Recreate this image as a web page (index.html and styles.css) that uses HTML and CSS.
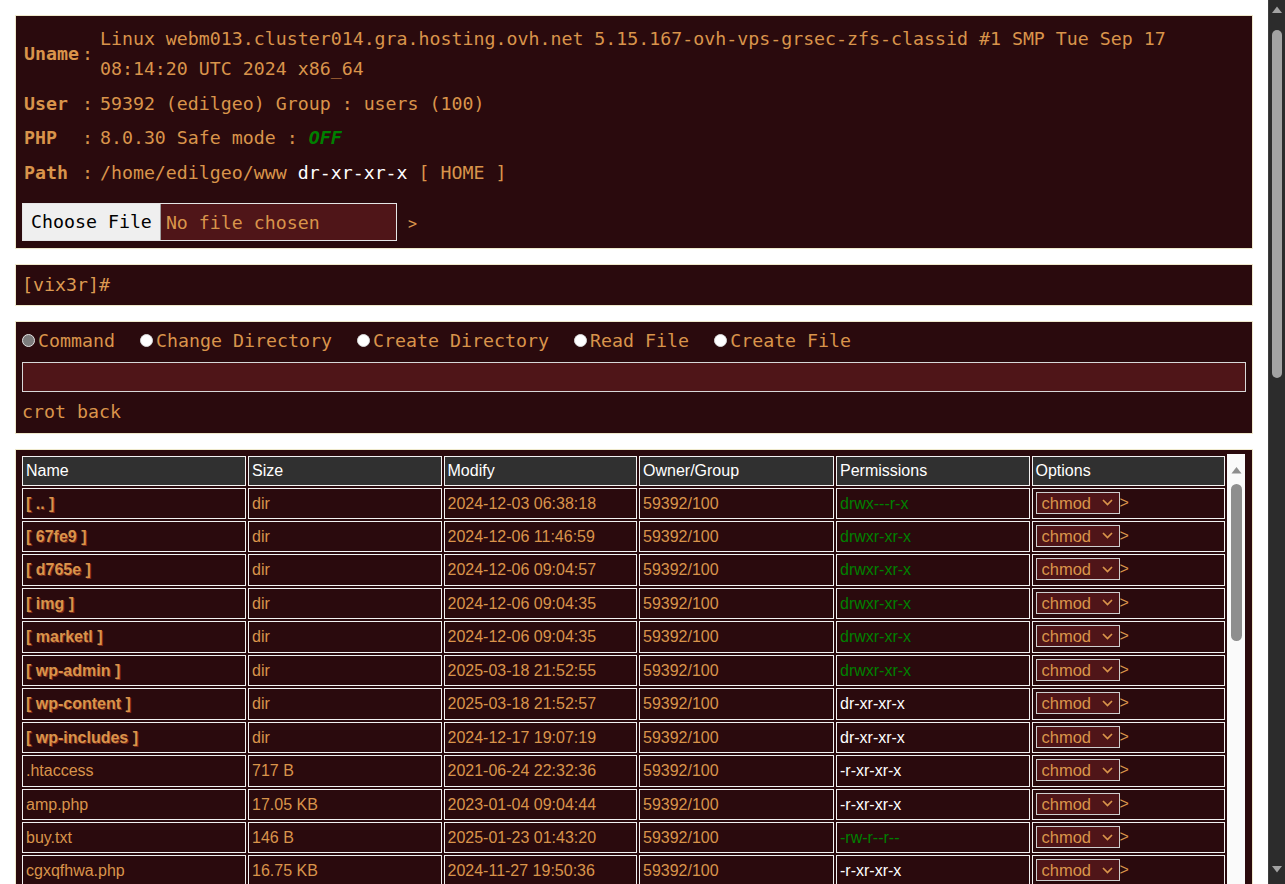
FILE: index.html
```html
<!DOCTYPE html>
<html lang="en">
<head>
<meta charset="utf-8">
<title>vix3r</title>
<link rel="stylesheet" href="styles.css">
</head>
<body>
<div class="page">
  <section class="panel info">
    <div class="info-grid">
      <b class="lbl">Uname</b><span class="colon">:</span><span class="val">Linux webm013.cluster014.gra.hosting.ovh.net 5.15.167-ovh-vps-grsec-zfs-classid #1 SMP Tue Sep 17 08:14:20 UTC 2024 x86_64</span>
      <b class="lbl">User</b><span class="colon">:</span><span class="val">59392 (edilgeo) Group : users (100)</span>
      <b class="lbl">PHP</b><span class="colon">:</span><span class="val">8.0.30 Safe mode : <i class="off">OFF</i></span>
      <b class="lbl">Path</b><span class="colon">:</span><span class="val">/home/edilgeo/www <span class="white">dr-xr-xr-x</span> <a class="home" href="#">[ HOME ]</a></span>
    </div>
    <form class="upload">
      <input class="file" type="file">
      <input class="go" type="submit" value="&gt;">
    </form>
  </section>

  <section class="panel prompt">[vix3r]#</section>

  <section class="panel cmd">
    <div class="radios">
      <label class="opt"><input type="radio" name="act" checked>Command</label>
      <label class="opt"><input type="radio" name="act">Change Directory</label>
      <label class="opt"><input type="radio" name="act">Create Directory</label>
      <label class="opt"><input type="radio" name="act">Read File</label>
      <label class="opt"><input type="radio" name="act">Create File</label>
    </div>
    <input class="cmd-input" type="text">
    <div class="back">crot back</div>
  </section>

  <section class="panel files">
    <div class="scroll">
      <table class="ftable">
        <colgroup><col class="c-name"><col><col><col class="c-owner"><col><col></colgroup>
        <thead>
          <tr><th>Name</th><th>Size</th><th>Modify</th><th>Owner/Group</th><th>Permissions</th><th>Options</th></tr>
        </thead>
        <tbody>
          <tr><td class="dir">[ .. ]</td><td>dir</td><td>2024-12-03 06:38:18</td><td>59392/100</td><td class="w">drwx---r-x</td><td class="act"><select><option>chmod</option></select><button class="arrow">&gt;</button></td></tr>
          <tr><td class="dir">[ 67fe9 ]</td><td>dir</td><td>2024-12-06 11:46:59</td><td>59392/100</td><td class="w">drwxr-xr-x</td><td class="act"><select><option>chmod</option></select><button class="arrow">&gt;</button></td></tr>
          <tr><td class="dir">[ d765e ]</td><td>dir</td><td>2024-12-06 09:04:57</td><td>59392/100</td><td class="w">drwxr-xr-x</td><td class="act"><select><option>chmod</option></select><button class="arrow">&gt;</button></td></tr>
          <tr><td class="dir">[ img ]</td><td>dir</td><td>2024-12-06 09:04:35</td><td>59392/100</td><td class="w">drwxr-xr-x</td><td class="act"><select><option>chmod</option></select><button class="arrow">&gt;</button></td></tr>
          <tr><td class="dir">[ marketl ]</td><td>dir</td><td>2024-12-06 09:04:35</td><td>59392/100</td><td class="w">drwxr-xr-x</td><td class="act"><select><option>chmod</option></select><button class="arrow">&gt;</button></td></tr>
          <tr><td class="dir">[ wp-admin ]</td><td>dir</td><td>2025-03-18 21:52:55</td><td>59392/100</td><td class="w">drwxr-xr-x</td><td class="act"><select><option>chmod</option></select><button class="arrow">&gt;</button></td></tr>
          <tr><td class="dir">[ wp-content ]</td><td>dir</td><td>2025-03-18 21:52:57</td><td>59392/100</td><td class="r">dr-xr-xr-x</td><td class="act"><select><option>chmod</option></select><button class="arrow">&gt;</button></td></tr>
          <tr><td class="dir">[ wp-includes ]</td><td>dir</td><td>2024-12-17 19:07:19</td><td>59392/100</td><td class="r">dr-xr-xr-x</td><td class="act"><select><option>chmod</option></select><button class="arrow">&gt;</button></td></tr>
          <tr><td>.htaccess</td><td>717 B</td><td>2021-06-24 22:32:36</td><td>59392/100</td><td class="r">-r-xr-xr-x</td><td class="act"><select><option>chmod</option></select><button class="arrow">&gt;</button></td></tr>
          <tr><td>amp.php</td><td>17.05 KB</td><td>2023-01-04 09:04:44</td><td>59392/100</td><td class="r">-r-xr-xr-x</td><td class="act"><select><option>chmod</option></select><button class="arrow">&gt;</button></td></tr>
          <tr><td>buy.txt</td><td>146 B</td><td>2025-01-23 01:43:20</td><td>59392/100</td><td class="w">-rw-r--r--</td><td class="act"><select><option>chmod</option></select><button class="arrow">&gt;</button></td></tr>
          <tr><td>cgxqfhwa.php</td><td>16.75 KB</td><td>2024-11-27 19:50:36</td><td>59392/100</td><td class="r">-r-xr-xr-x</td><td class="act"><select><option>chmod</option></select><button class="arrow">&gt;</button></td></tr>
        </tbody>
      </table>
    </div>
    <div class="ibar">
      <svg class="ibar-arrow" width="11" height="8" viewBox="0 0 11 8"><path d="M0.5 7.5h10L5.5 1z" fill="#8e8e8e"/></svg>
      <div class="ibar-thumb"></div>
    </div>
  </section>
</div>
<aside class="vscroll">
  <svg class="vs-arrow" width="10" height="7" viewBox="0 0 10 7"><path d="M0 7h10L5 0.5z" fill="#a3a3a3"/></svg>
  <div class="vs-thumb"></div>
  <svg class="vs-arrow vs-down" width="10" height="7" viewBox="0 0 10 7"><path d="M0 0h10L5 6.5z" fill="#a3a3a3"/></svg>
</aside>
</body>
</html>
```
FILE: styles.css
```css
html {
  background: #ffffff;
}

body {
  margin: 0;
  display: flex;
  align-items: flex-start;
  font-family: "DejaVu Sans Mono", "Liberation Mono", monospace;
  font-size: 18.25px;
  color: #d9944b;
}

.page {
  flex: 1;
  min-width: 0;
  padding: 15px;
}

/* simulated viewport scrollbar */
.vscroll {
  flex: none;
  position: sticky;
  top: 0;
  width: 16px;
  height: 100vh;
  background: #2c2c2c;
  border-left: 1px solid #3e3e3e;
  display: flex;
  flex-direction: column;
  align-items: center;
}
.vs-arrow {
  margin-top: 6px;
  flex: none;
}
.vs-thumb {
  width: 10px;
  height: 348px;
  margin-top: 17px;
  border-radius: 5px;
  background: #a3a3a3;
}
.vs-down {
  margin-top: auto;
  margin-bottom: 11px;
}

.panel {
  background: #2a0a0d;
  border: 1px solid #efe9cc;
  margin-bottom: 15px;
}

/* info panel */
.info {
  padding: 8px 6px 7px 6px;
}
.info-grid {
  display: grid;
  grid-template-columns: auto auto 1fr;
  column-gap: 3px;
  row-gap: 4.5px;
  line-height: 30px;
  margin-left: 2px;
  align-items: center;
}
.lbl {
  font-weight: bold;
}
.colon {
  padding-right: 4px;
}
.off {
  color: #008000;
  font-weight: bold;
}
.white {
  color: #ffffff;
}
.home {
  color: #d9944b;
  text-decoration: none;
}
.upload {
  display: flex;
  align-items: center;
  margin-top: 15px;
}
.file {
  width: 375px;
  height: 38px;
  box-sizing: border-box;
  border: 1px solid #e6e6e6;
  background: #4f1518;
  color: #d9944b;
  font: 18.25px "DejaVu Sans Mono", "Liberation Mono", monospace;
  padding: 0;
}
.file::file-selector-button {
  height: 36px;
  margin: 0 5px 0 0;
  padding: 0 8px;
  border: none;
  border-right: 1px solid #a0a0a0;
  background: #efefef;
  color: #000000;
  font: 18.25px "DejaVu Sans Mono", "Liberation Mono", monospace;
}
.go {
  background: none;
  border: none;
  color: #d9944b;
  font: 15px "DejaVu Sans Mono", "Liberation Mono", monospace;
  margin-left: 9px;
  padding: 4px 2px 0;
}

/* prompt */
.prompt {
  padding: 9px 6px 10px 6px;
  line-height: 21px;
  color: #dd9a52;
}

/* command panel */
.cmd {
  padding: 7px 6px 9px 6px;
}
.radios {
  display: flex;
  gap: 25.2px;
  line-height: 24px;
}
.opt {
  display: flex;
  align-items: center;
}
.opt input {
  appearance: none;
  flex: none;
  width: 13px;
  height: 13px;
  margin: 0 3px 0 0;
  border-radius: 50%;
  background: #ffffff;
  border: 1px solid #d8d8d8;
  box-sizing: border-box;
}
.opt input:checked {
  background: #7c7c7c;
  border: 1.5px solid #e4e4e4;
}
.cmd-input {
  display: block;
  width: 100%;
  box-sizing: border-box;
  height: 30px;
  margin: 9px 0 8px;
  background: #4f1518;
  border: 1px solid #d8d8d8;
  color: #d9944b;
  font: 18.25px "DejaVu Sans Mono", "Liberation Mono", monospace;
  outline: none;
}
.back {
  line-height: 24px;
}

/* files panel */
.files {
  display: flex;
  padding: 4px 7px 6px 4px;
}
.scroll {
  flex: 1;
  min-width: 0;
  height: 480px;
  overflow: hidden;
}
.ibar {
  flex: none;
  width: 18px;
  background: #fafafa;
  display: flex;
  flex-direction: column;
  align-items: center;
}
.ibar-arrow {
  margin-top: 12px;
}
.ibar-thumb {
  width: 11px;
  height: 157px;
  margin-top: 10px;
  border-radius: 6px;
  background: #8e8e8e;
}

.ftable {
  width: 100%;
  table-layout: fixed;
  border-collapse: separate;
  border-spacing: 2px;
  font-family: "Liberation Sans", Arial, sans-serif;
  font-size: 16px;
}
.c-name {
  width: 224px;
}
.c-owner {
  width: 195px;
}
.ftable th {
  background: #303030;
  color: #ffffff;
  font-weight: normal;
  text-align: left;
  border: 1px solid #f2f2f2;
  padding: 3px 3px;
  line-height: 22px;
  white-space: nowrap;
}
.ftable td {
  border: 1px solid #f2f2f2;
  padding: 3px 3px;
  height: 23.45px;
  line-height: 23.45px;
  color: #d9944b;
  white-space: nowrap;
  overflow: hidden;
}
.ftable td.dir {
  font-weight: bold;
  text-shadow: 1px 1px 0 #7a2a1a;
}
.ftable td.w {
  color: #008000;
}
.ftable td.r {
  color: #ffffff;
}
.act select {
  appearance: none;
  width: 84px;
  height: 22px;
  vertical-align: top;
  background: #4f1518 url("data:image/svg+xml,%3Csvg xmlns='http://www.w3.org/2000/svg' width='11' height='7' viewBox='0 0 11 7'%3E%3Cpath d='M1 1l4.5 4.5L10 1' fill='none' stroke='%23d9944b' stroke-width='1.7'/%3E%3C/svg%3E") no-repeat right 6px center;
  color: #d9944b;
  border: 1px solid #cfcfcf;
  font: 16.5px "Liberation Sans", Arial, sans-serif;
  line-height: 20px;
  padding: 0 0 0 5px;
  margin: 0;
  border-radius: 0;
}
.arrow {
  background: none;
  border: none;
  color: #d9944b;
  font: 16px "Liberation Sans", Arial, sans-serif;
  padding: 0;
  margin: 0;
  vertical-align: top;
  line-height: 22px;
}
```
